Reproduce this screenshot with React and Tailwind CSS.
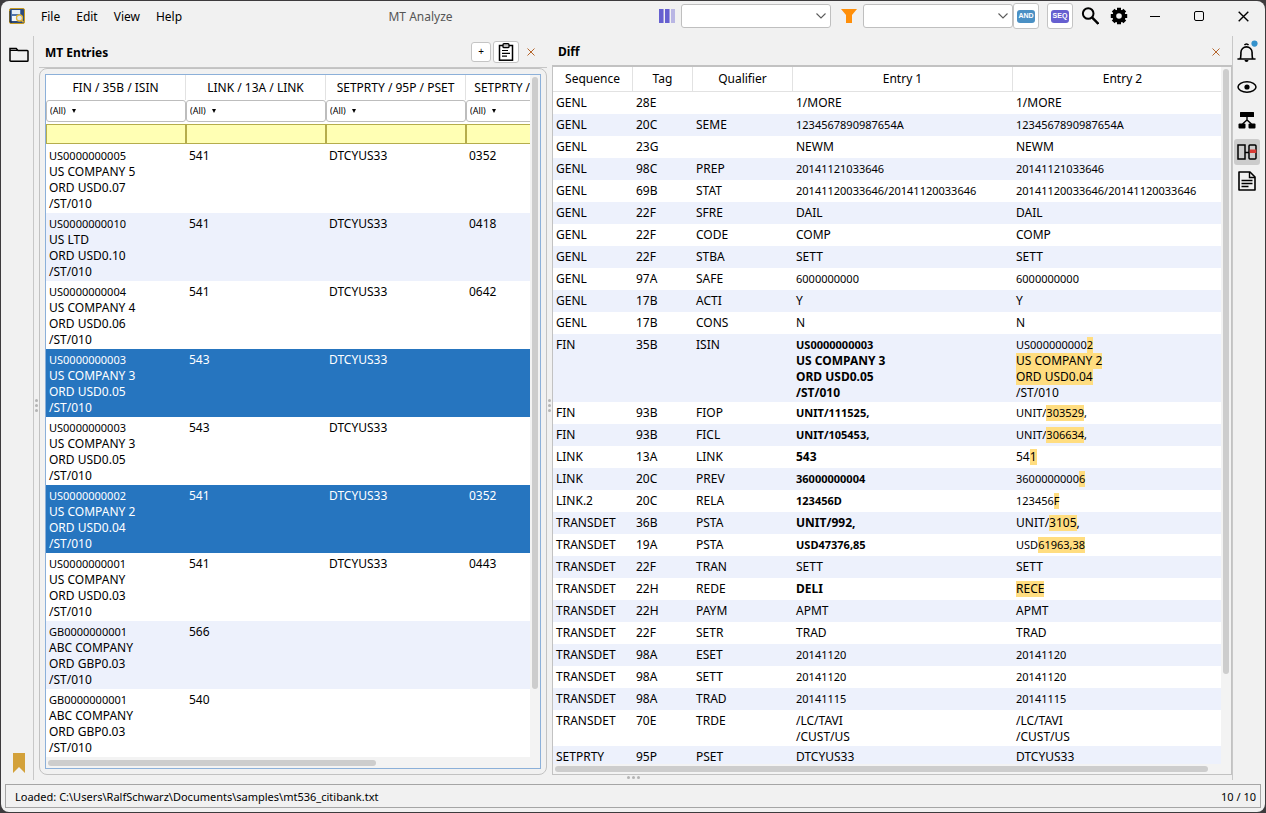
import React from "react";

const COMPANY_ROWS = [
  { isin: ["US0000000005", "US COMPANY 5", "ORD USD0.07", "/ST/010"], link: "541", pset: "DTCYUS33", agent: "0352" },
  { isin: ["US0000000010", "US LTD", "ORD USD0.10", "/ST/010"], link: "541", pset: "DTCYUS33", agent: "0418" },
  { isin: ["US0000000004", "US COMPANY 4", "ORD USD0.06", "/ST/010"], link: "541", pset: "DTCYUS33", agent: "0642" },
  { isin: ["US0000000003", "US COMPANY 3", "ORD USD0.05", "/ST/010"], link: "543", pset: "DTCYUS33", agent: "", selected: true },
  { isin: ["US0000000003", "US COMPANY 3", "ORD USD0.05", "/ST/010"], link: "543", pset: "DTCYUS33", agent: "" },
  { isin: ["US0000000002", "US COMPANY 2", "ORD USD0.04", "/ST/010"], link: "541", pset: "DTCYUS33", agent: "0352", selected: true },
  { isin: ["US0000000001", "US COMPANY", "ORD USD0.03", "/ST/010"], link: "541", pset: "DTCYUS33", agent: "0443" },
  { isin: ["GB0000000001", "ABC COMPANY", "ORD GBP0.03", "/ST/010"], link: "566", pset: "", agent: "" },
  { isin: ["GB0000000001", "ABC COMPANY", "ORD GBP0.03", "/ST/010"], link: "540", pset: "", agent: "" },
];

const ENTRY_COLUMNS = ["FIN / 35B / ISIN", "LINK / 13A / LINK", "SETPRTY / 95P / PSET", "SETPRTY / 95R / DEAG"];

// Changed parts of the second entry are wrapped in square brackets.
const DIFF_ROWS = [
  ["GENL", "28E", "", "1/MORE"],
  ["GENL", "20C", "SEME", "1234567890987654A"],
  ["GENL", "23G", "", "NEWM"],
  ["GENL", "98C", "PREP", "20141121033646"],
  ["GENL", "69B", "STAT", "20141120033646/20141120033646"],
  ["GENL", "22F", "SFRE", "DAIL"],
  ["GENL", "22F", "CODE", "COMP"],
  ["GENL", "22F", "STBA", "SETT"],
  ["GENL", "97A", "SAFE", "6000000000"],
  ["GENL", "17B", "ACTI", "Y"],
  ["GENL", "17B", "CONS", "N"],
  ["FIN", "35B", "ISIN", "US0000000003\nUS COMPANY 3\nORD USD0.05\n/ST/010", "US000000000[2]\n[US COMPANY 2]\n[ORD USD0.04]\n/ST/010"],
  ["FIN", "93B", "FIOP", "UNIT/111525,", "UNIT/[303529],"],
  ["FIN", "93B", "FICL", "UNIT/105453,", "UNIT/[306634],"],
  ["LINK", "13A", "LINK", "543", "54[1]"],
  ["LINK", "20C", "PREV", "36000000004", "3600000000[6]"],
  ["LINK.2", "20C", "RELA", "123456D", "123456[F]"],
  ["TRANSDET", "36B", "PSTA", "UNIT/992,", "UNIT/[3105],"],
  ["TRANSDET", "19A", "PSTA", "USD47376,85", "USD[61963,38]"],
  ["TRANSDET", "22F", "TRAN", "SETT"],
  ["TRANSDET", "22H", "REDE", "DELI", "[RECE]"],
  ["TRANSDET", "22H", "PAYM", "APMT"],
  ["TRANSDET", "22F", "SETR", "TRAD"],
  ["TRANSDET", "98A", "ESET", "20141120"],
  ["TRANSDET", "98A", "SETT", "20141120"],
  ["TRANSDET", "98A", "TRAD", "20141115"],
  ["TRANSDET", "70E", "TRDE", "/LC/TAVI\n/CUST/US"],
  ["SETPRTY", "95P", "PSET", "DTCYUS33"],
];

const isCode = (line) => /\d{5}/.test(line);

function Line({ text }) {
  const parts = text.split(/(\[[^\]]*\])/).filter(Boolean);
  return (
    <div className={isCode(text) ? "text-[11px] leading-4" : "text-xs leading-4"}>
      {parts.map((part, i) =>
        part.startsWith("[") ? (
          <mark key={i} className="inline-block bg-[#ffdd80] text-black">{part.slice(1, -1)}</mark>
        ) : (
          <span key={i}>{part}</span>
        )
      )}
    </div>
  );
}

function Lines({ text }) {
  return text.split("\n").map((line, i) => <Line key={i} text={line} />);
}

function AppIcon() {
  return (
    <svg viewBox="0 0 16 16" className="size-4" aria-hidden="true">
      <rect x="0.5" y="0.5" width="15" height="15" rx="1.5" fill="#2d4a7c" stroke="#c79a1e" />
      <rect x="2" y="2" width="10" height="11" fill="#4f74ac" />
      <path d="M3 2h8v4H3z" fill="#e6edf7" />
      <path d="M3 8h6v5H3z" fill="#f4f6fa" />
      <path d="M1 3v11h2" stroke="#16264a" fill="none" />
      <circle cx="10.5" cy="10" r="3" fill="#dbe6f2" stroke="#e2b437" strokeWidth="1.3" />
      <path d="M12.5 12.3l2 2" stroke="#e2b437" strokeWidth="1.6" />
    </svg>
  );
}

function Cross({ className }) {
  return (
    <svg viewBox="0 0 8 8" className={className} aria-hidden="true">
      <path d="M0.5 0.5l7 7M7.5 0.5l-7 7" stroke="currentColor" fill="none" />
    </svg>
  );
}

function Gear() {
  return (
    <svg viewBox="0 0 18 18" className="size-[18px]" aria-hidden="true">
      <g stroke="#000" strokeWidth="4" fill="none">
        <path d="M9 0.8v3M9 14.2v3M0.8 9h3M14.2 9h3M3.2 3.2l2.2 2.2M12.6 12.6l2.2 2.2M3.2 14.8l2.2-2.2M12.6 5.4l2.2-2.2" />
        <circle cx="9" cy="9" r="4.7" strokeWidth="3.8" />
      </g>
    </svg>
  );
}

function Combo({ label }) {
  return (
    <label className="relative flex h-6 w-[150px] items-center">
      <span className="sr-only">{label}</span>
      <select className="h-full w-full appearance-none rounded-[3px] border border-[#bfbfbf] bg-white px-2 text-xs">
        <option value=""></option>
      </select>
      <svg viewBox="0 0 10 6" className="pointer-events-none absolute right-[5px] h-[6px] w-[10px]" aria-hidden="true">
        <path d="M0.5 0.5L5 5l4.5-4.5" stroke="#5c5c5c" strokeWidth="1.1" fill="none" />
      </svg>
    </label>
  );
}

function TitleBar() {
  return (
    <header className="flex h-[30px] items-center pl-2 pr-4">
      <AppIcon />
      <nav className="ml-4 flex gap-4 pt-[2px] text-xs">
        {["File", "Edit", "View", "Help"].map((m) => (
          <button key={m} type="button">{m}</button>
        ))}
      </nav>
      <h1 className="flex-1 pt-[2px] text-center text-xs text-[#555]">MT Analyze</h1>
      <svg viewBox="0 0 16 14" className="mr-[6px] h-[14px] w-4" aria-hidden="true">
        <path d="M0 0h4v14H0zM6 0h4v14H6z" fill="#6660d0" />
        <path d="M4 0h1v14H4zM10 0h1v14h-1z" fill="#a5a1e0" />
        <path d="M12 0h4v14h-4z" fill="#b9b6e4" />
      </svg>
      <Combo label="Columns" />
      <svg viewBox="0 0 16 14" className="ml-[10px] mr-[6px] h-[14px] w-4" aria-hidden="true">
        <path d="M0 0h16l-5 6v8H5V6z" fill="#ff8f0a" />
      </svg>
      <Combo label="Filter" />
      <button type="button" className="flex size-[26px] items-center justify-center rounded-[3px] border border-[#c4c4c4] bg-white">
        <span className="flex h-[13px] w-[18px] items-center justify-center rounded-[3px] bg-[#4a90c4] font-['Liberation_Sans',sans-serif] text-[7px] font-bold text-white">AND</span>
      </button>
      <button type="button" className="ml-2 flex size-[26px] items-center justify-center rounded-[3px] border border-[#c4c4c4] bg-white">
        <span className="flex h-[13px] w-[18px] items-center justify-center rounded-[3px] bg-[#665fd0] font-['Liberation_Sans',sans-serif] text-[7px] font-bold text-white">SEQ</span>
      </button>
      <button type="button" aria-label="Search" className="ml-2">
        <svg viewBox="0 0 18 18" className="size-[18px]" aria-hidden="true">
          <circle cx="7.2" cy="6.5" r="5.3" stroke="#000" strokeWidth="2" fill="none" />
          <path d="M11 10.400l6.400 6.400" stroke="#000" strokeWidth="2.500" />
        </svg>
      </button>
      <button type="button" aria-label="Settings" className="ml-[11px]"><Gear /></button>
      <div className="ml-[22px] flex items-center gap-[34px]">
        <button type="button" aria-label="Minimize" className="flex h-[10px] w-[10px] items-center">
          <span className="h-px w-full bg-black" />
        </button>
        <button type="button" aria-label="Maximize" className="size-[10px] rounded-[2px] border border-black" />
        <button type="button" aria-label="Close">
          <Cross className="size-[11px]" />
        </button>
      </div>
    </header>
  );
}

function LeftRail() {
  return (
    <aside className="flex w-[33px] shrink-0 flex-col items-center justify-between border-r border-[#c8c8c8] pb-[7px] pl-[3px] pt-[11px]">
      <button type="button" aria-label="Open">
        <svg viewBox="0 0 20 16" className="h-4 w-5" aria-hidden="true">
          <path d="M1 14V1.500h6.200L9 3.500h9.200a.8.8 0 0 1 .8.8v9.200a.8.8 0 0 1-.8.8H1.800A.8.8 0 0 1 1 13.500z" fill="none" stroke="#000" strokeWidth="1.500" />
          <path d="M1 3.300h7.600" stroke="#000" strokeWidth="1.300" />
        </svg>
      </button>
      <button type="button" aria-label="Bookmarks">
        <svg viewBox="0 0 12 20" className="h-5 w-3" aria-hidden="true">
          <path d="M0 0h12v20l-6-6-6 6z" fill="#d3a13a" />
        </svg>
      </button>
    </aside>
  );
}

function RightRail() {
  return (
    <aside className="flex w-[33px] shrink-0 flex-col items-center border-l border-[#c8c8c8] pr-1">
      <button type="button" aria-label="Notifications" className="flex h-8 items-center">
        <svg viewBox="0 0 22 24" className="h-6 w-[22px]" aria-hidden="true">
          <path d="M2 19h17M4 19c.8-1 .9-2 .9-4.500V12.500a5.600 5.600 0 0 1 11.200 0v2c0 2.500.1 3.500.9 4.500" fill="none" stroke="#000" strokeWidth="1.600" strokeLinecap="round" />
          <path d="M8.500 5.200a2.300 2.300 0 0 1 4 0" fill="none" stroke="#000" strokeWidth="1.500" />
          <path d="M8.500 20h4a2 2 0 0 1-4 0z" fill="#000" />
          <circle cx="18.500" cy="3.600" r="3.100" fill="#3592cc" />
        </svg>
      </button>
      <button type="button" aria-label="View" className="mt-[3px] flex h-8 items-center">
        <svg viewBox="0 0 20 14" className="h-[14px] w-5" aria-hidden="true">
          <ellipse cx="10" cy="7" rx="9" ry="5.200" fill="none" stroke="#000" strokeWidth="1.500" />
          <circle cx="10" cy="7" r="2.600" fill="#000" />
        </svg>
      </button>
      <button type="button" aria-label="Structure" className="mt-px flex h-8 items-center">
        <svg viewBox="0 0 18 18" className="size-[18px]" aria-hidden="true">
          <rect x="2" y="1" width="14" height="5" rx="0.5" />
          <rect x="0.500" y="12.500" width="7" height="5" rx="1" />
          <rect x="10.500" y="12.500" width="7" height="5" rx="1" />
          <path d="M9 5v4M4.500 13l4.500-4 4.500 4" fill="none" stroke="#000" strokeWidth="1.400" />
        </svg>
      </button>
      <button type="button" aria-label="Diff" aria-pressed="true" className="mt-[3px] flex size-[26px] items-center justify-center rounded-[3px] bg-[#cccccc]">
        <svg viewBox="0 0 20 16" className="h-4 w-5" aria-hidden="true">
          <rect x="1" y="1" width="7" height="14" fill="none" stroke="#000" strokeWidth="1.500" />
          <rect x="12" y="1" width="7" height="14" rx="1" fill="none" stroke="#000" strokeWidth="1.500" />
          <rect x="12.800" y="5.500" width="6.500" height="3.500" fill="#d63a34" />
          <path d="M8 8.500h4" stroke="#000" strokeWidth="1.400" />
        </svg>
      </button>
      <button type="button" aria-label="Document" className="mt-1 flex h-6 items-center">
        <svg viewBox="0 0 18 20" className="h-5 w-[18px]" aria-hidden="true">
          <path d="M1 1h11l5 5v13H1z" fill="none" stroke="#000" strokeWidth="1.600" strokeLinejoin="round" />
          <path d="M11.500 1v5.500H17" fill="none" stroke="#000" strokeWidth="1.400" />
          <path d="M3.500 9.500h11M3.500 12.500h11M3.500 15.500h7" stroke="#000" strokeWidth="1.300" />
        </svg>
      </button>
    </aside>
  );
}

function Grip({ vertical }) {
  return (
    <div className={vertical ? "flex w-[5px] shrink-0 flex-col items-center justify-center gap-[2px]" : "flex h-[5px] shrink-0 items-center justify-center gap-[2px]"}>
      <i className="size-[3px] rounded-full bg-[#b4b4b4]" />
      <i className="size-[3px] rounded-full bg-[#b4b4b4]" />
      <i className="size-[3px] rounded-full bg-[#b4b4b4]" />
    </div>
  );
}

function EntriesTable() {
  return (
    <table className="w-[560px] table-fixed border-separate border-spacing-0 text-xs">
      <thead>
        <tr>
          {ENTRY_COLUMNS.map((c) => (
            <th key={c} className="h-[25px] w-[140px] whitespace-nowrap border-r border-[#e2e2e2] p-0 text-center font-normal">{c}</th>
          ))}
        </tr>
        <tr>
          {ENTRY_COLUMNS.map((c) => (
            <td key={c} className="h-6 p-0 align-top">
              <label className="flex h-[22px] items-center gap-[6px] rounded-[3px] border border-[#bdbdbd] bg-white pl-[3px]">
                <span className="sr-only">{c} filter</span>
                <select className="w-4 appearance-none bg-white text-[9px]">
                  <option>(All)</option>
                </select>
                <svg viewBox="0 0 4 4" className="size-1" aria-hidden="true"><path d="M0 0h4L2 4z" /></svg>
              </label>
            </td>
          ))}
        </tr>
        <tr>
          {ENTRY_COLUMNS.map((c) => (
            <td key={c} className="h-[21px] p-0 align-top">
              <input type="text" aria-label={c + " search"} className="block h-5 w-full border border-[#b5ad4c] bg-[#ffffb4] px-1 outline-none" />
            </td>
          ))}
        </tr>
      </thead>
      <tbody>
        {COMPANY_ROWS.map((r, i) => (
          <tr key={i} className={r.selected ? "bg-[#2675bf] text-white" : i % 2 ? "bg-[#edf1fc]" : "bg-white"}>
            {[r.isin.join("\n"), r.link, r.pset, r.agent].map((t, k) => (
              <td key={k} className="p-0 pb-px pl-[3px] pt-[3px] align-top"><Lines text={t} /></td>
            ))}
          </tr>
        ))}
      </tbody>
    </table>
  );
}

function EntriesPanel() {
  return (
    <section className="flex min-w-0 flex-[508_1_0] flex-col">
      <div className="flex h-8 items-center border-b border-[#c6c6c6] pl-[6px] pr-3">
        <h2 className="flex-1 pt-[2px] text-xs font-bold">MT Entries</h2>
        <button type="button" className="flex size-5 items-center justify-center rounded-[3px] border border-[#c4c4c4] bg-white text-[10px]">+</button>
        <button type="button" aria-label="Copy" className="ml-[2px] flex h-[22px] w-[26px] items-center justify-center rounded-[3px] border border-[#c4c4c4] bg-white">
          <svg viewBox="0 0 16 18" className="h-[18px] w-4" aria-hidden="true">
            <rect x="1.500" y="2.500" width="13" height="14.700" fill="none" stroke="#000" strokeWidth="1.500" />
            <rect x="5" y="0.700" width="6" height="4" rx="1" fill="#bbb" stroke="#000" strokeWidth="1.300" />
            <path d="M4 7.500h6M4 10.300h8M4 13.200h5" stroke="#000" strokeWidth="1.200" />
          </svg>
        </button>
        <button type="button" aria-label="Close MT Entries" className="ml-2 text-[#b5652b]"><Cross className="size-2" /></button>
      </div>
      <div className="flex min-h-0 flex-1 rounded-lg border border-[#c2c2c2] p-[5px]">
        <div className="flex min-w-0 flex-1 flex-col border border-[#8cb0d9] bg-[#f3f3f3]">
          <div className="flex min-h-0 flex-1">
            <div className="min-w-0 flex-1 overflow-hidden bg-white"><EntriesTable /></div>
            <div className="w-[10px] shrink-0 px-[2px] pt-[2px]"><div className="h-[90%] rounded-full bg-[#cdcdcd]" /></div>
          </div>
          <div className="flex h-[11px] shrink-0 items-center pl-[2px] pr-[10px]"><div className="h-[6px] w-[68%] rounded-full bg-[#cdcdcd]" /></div>
        </div>
      </div>
    </section>
  );
}

function DiffTable() {
  return (
    <table className="w-[680px] table-fixed border-separate border-spacing-0 text-xs">
      <colgroup>
        <col className="w-[80px]" />
        <col className="w-[60px]" />
        <col className="w-[100px]" />
        <col className="w-[220px]" />
        <col className="w-[220px]" />
      </colgroup>
      <thead>
        <tr>
          {["Sequence", "Tag", "Qualifier", "Entry 1", "Entry 2"].map((c) => (
            <th key={c} className="h-[25px] border-b border-r border-[#e2e2e2] p-0 text-center font-normal">{c}</th>
          ))}
        </tr>
      </thead>
      <tbody>
        {DIFF_ROWS.map(([seq, tag, qual, one, two], i) => {
          const pad = one.includes("\n") ? "p-0 pb-px pl-[3px] pt-[3px] align-top" : "p-0 pb-[3px] pl-[3px] pt-[3px] align-top";
          return (
            <tr key={i} className={i % 2 ? "bg-[#edf1fc]" : "bg-white"}>
              <td className={pad}><Lines text={seq} /></td>
              <td className={pad}><Lines text={tag} /></td>
              <td className={pad}><Lines text={qual} /></td>
              <td className={two ? pad + " font-bold" : pad}><Lines text={one} /></td>
              <td className={pad}><Lines text={two || one} /></td>
            </tr>
          );
        })}
      </tbody>
    </table>
  );
}

function DiffPanel() {
  return (
    <section className="flex min-w-0 flex-[680_1_0] flex-col">
      <div className="flex h-[29px] items-center pl-[6px] pr-3 pt-[2px]">
        <h2 className="flex-1 text-xs font-bold">Diff</h2>
        <button type="button" aria-label="Close Diff" className="text-[#b5652b]"><Cross className="size-2" /></button>
      </div>
      <div className="flex min-h-0 flex-1 flex-col border border-t-2 border-[#c2c2c2] bg-[#f3f3f3]">
        <div className="flex min-h-0 flex-1">
          <div className="min-w-0 flex-1 overflow-hidden bg-white"><DiffTable /></div>
          <div className="w-[10px] shrink-0 px-[2px] pt-[2px]"><div className="h-[87%] rounded-full bg-[#cdcdcd]" /></div>
        </div>
        <div className="flex h-[10px] shrink-0 items-center pl-[2px] pr-[10px]"><div className="h-[6px] w-[98%] rounded-full bg-[#cdcdcd]" /></div>
      </div>
    </section>
  );
}

export default function App() {
  return (
    <div className="h-screen bg-[#3d3b3d] p-px font-['Noto_Sans',sans-serif] text-black">
      <div className="flex h-full flex-col overflow-hidden rounded-lg bg-[#f1f1f1]">
        <TitleBar />
        <main className="mt-[5px] flex min-h-0 flex-1">
          <LeftRail />
          <div className="flex min-w-0 flex-1 flex-col">
            <div className="flex min-h-0 flex-1">
              <Grip vertical />
              <EntriesPanel />
              <Grip vertical />
              <DiffPanel />
            </div>
            <Grip />
          </div>
          <RightRail />
        </main>
        <footer className="mx-1 my-1 flex h-6 shrink-0 items-center justify-between border border-[#a5a5a5] pl-[9px] pr-1 pt-[2px] text-[11px]">
          <span>Loaded: C:\Users\RalfSchwarz\Documents\samples\mt536_citibank.txt</span>
          <span>10 / 10</span>
        </footer>
      </div>
    </div>
  );
}
